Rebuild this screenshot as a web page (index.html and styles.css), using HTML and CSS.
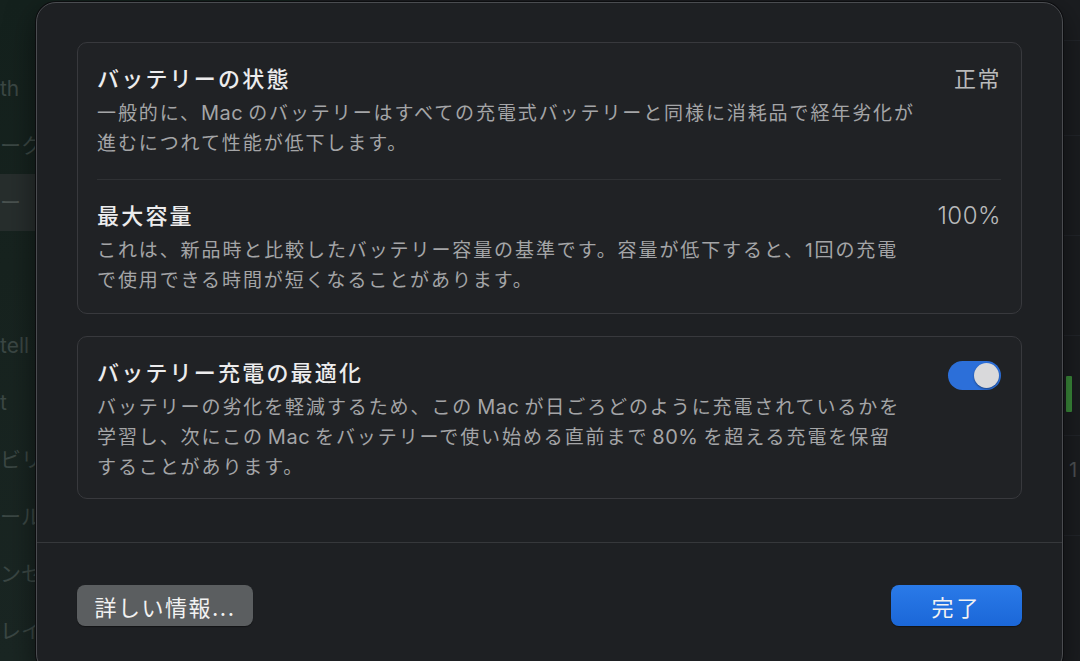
FILE: index.html
```html
<!DOCTYPE html>
<html lang="ja">
<head>
<meta charset="utf-8">
<title>バッテリーの状態</title>
<link rel="stylesheet" href="styles.css">
</head>
<body>
<div class="window">
  <nav class="sidebar">
    <div class="side-item">th</div>
    <div class="side-item">ーク</div>
    <div class="side-item selected">ー</div>
    <div class="side-item gap">tell</div>
    <div class="side-item">t</div>
    <div class="side-item">ビリ</div>
    <div class="side-item">ール</div>
    <div class="side-item">ンセ</div>
    <div class="side-item">レイ</div>
  </nav>
  <main class="main">
    <div class="main-row"></div>
    <div class="main-row"></div>
    <div class="main-row"></div>
    <div class="main-row"><span class="level"></span></div>
    <div class="main-row"><span class="num">1</span></div>
    <div class="main-row"></div>
  </main>
</div>

<div class="dialog">
  <div class="dialog-body">
    <section class="group">
      <div class="row">
        <div class="row-text">
          <div class="row-title">バッテリーの状態</div>
          <div class="row-desc">一般的に、<span class="latin-word after-punct">Mac</span>のバッテリーはすべての充電式バッテリーと同様に消耗品で経年劣化が<br>進むにつれて性能が低下します。</div>
        </div>
        <div class="row-value">正常</div>
      </div>
      <div class="separator"></div>
      <div class="row row-last">
        <div class="row-text">
          <div class="row-title">最大容量</div>
          <div class="row-desc">これは、新品時と比較したバッテリー容量の基準です。容量が低下すると、1回の充電<br>で使用できる時間が短くなることがあります。</div>
        </div>
        <div class="row-value latin">100%</div>
      </div>
    </section>

    <section class="group">
      <div class="row row-single">
        <div class="row-text">
          <div class="row-title">バッテリー充電の最適化</div>
          <div class="row-desc">バッテリーの劣化を軽減するため、この<span class="latin-word">Mac</span>が日ごろどのように充電されているかを<br>学習し、次にこの<span class="latin-word">Mac</span>をバッテリーで使い始める直前まで<span class="latin-word">80%</span>を超える充電を保留<br>することがあります。</div>
        </div>
        <div class="toggle"><span class="knob"></span></div>
      </div>
    </section>
  </div>

  <footer class="dialog-footer">
    <button class="btn btn-secondary">詳しい情報...</button>
    <button class="btn btn-primary">完了</button>
  </footer>
</div>
</body>
</html>
```

FILE: styles.css
```css
* { box-sizing: border-box; }

html, body {
  margin: 0;
  padding: 0;
  width: 1080px;
  height: 661px;
  overflow: hidden;
  background: #1b1d20;
  font-family: "Inter", "Noto Sans CJK JP", sans-serif;
}

.window {
  display: flex;
  width: 1080px;
  height: 661px;
}

.sidebar {
  width: 300px;
  flex: none;
  display: flex;
  flex-direction: column;
  padding-top: 60px;
  background: linear-gradient(180deg, #14211d 0%, #17231f 40%, #1a2623 100%);
}

.side-item {
  height: 57px;
  line-height: 57px;
  font-size: 21px;
  color: #3b4744;
  white-space: nowrap;
}

.side-item.selected {
  background: #272e2d;
  color: #4a5250;
}

.side-item.gap {
  margin-top: 86px;
}

.main {
  flex: 1;
  display: flex;
  flex-direction: column;
  background: #1b1d20;
  padding-top: 40px;
}

.main-row {
  height: 100px;
  border-top: 1px solid #22252a;
  padding-left: 766px;
}

.main-row:first-child {
  height: 95px;
}

.level {
  display: block;
  width: 6px;
  height: 36px;
  margin-top: 40px;
  background: #3a8a3a;
  border-radius: 1px;
}

.num {
  display: block;
  margin-top: 22px;
  margin-left: 3px;
  font-size: 20px;
  color: #4d5154;
}

.dialog {
  position: absolute;
  left: 36px;
  top: 2px;
  width: 1027px;
  height: 672px;
  background: #1e2023;
  border: 1px solid #4a4c50;
  border-radius: 20px;
  box-shadow: 0 0 0 1px #0c0d0f, 0 10px 30px rgba(0,0,0,0.5);
  display: flex;
  flex-direction: column;
}

.dialog-body {
  padding: 39px 40px 0 40px;
  display: flex;
  flex-direction: column;
  gap: 22px;
}

.group {
  background: #202225;
  border: 1px solid #38393d;
  border-radius: 10px;
  display: flex;
  flex-direction: column;
}

.row {
  display: flex;
  justify-content: space-between;
  align-items: flex-start;
  padding: 21px 20px 20px 19px;
}

.row-last {
  padding-bottom: 17px;
}

.row-single {
  padding-bottom: 15px;
}

.row-text {
  display: flex;
  flex-direction: column;
  gap: 5px;
}

.row-title {
  font-size: 22px;
  line-height: 30px;
  font-weight: 500;
  letter-spacing: 2.2px;
  color: #ececed;
}

.row-desc {
  font-size: 19px;
  line-height: 30px;
  letter-spacing: 1.9px;
  color: #a4a5a7;
  white-space: nowrap;
}

.latin-word {
  font-size: 20px;
  line-height: 1;
  letter-spacing: 0.5px;
  margin: 0 5px 0 4px;
}

.latin-word.after-punct {
  margin-left: 0;
}

.row-value {
  font-size: 22px;
  line-height: 30px;
  letter-spacing: 1.5px;
  color: #b9babb;
}

.row-value.latin {
  letter-spacing: 0.5px;
  font-size: 24px;
  font-weight: 300;
}

.separator {
  height: 1px;
  margin: 0 20px 0 19px;
  background: #2f3134;
}

.toggle {
  width: 53px;
  height: 29px;
  margin-top: 3px;
  border-radius: 15px;
  background: #2c6fd9;
  display: flex;
  justify-content: flex-end;
  align-items: center;
  padding-right: 2px;
}

.knob {
  width: 25px;
  height: 25px;
  border-radius: 50%;
  background: #d9d9db;
  box-shadow: 0 1px 2px rgba(0,0,0,0.4);
}

.dialog-footer {
  margin-top: 43px;
  border-top: 1px solid #36383b;
  display: flex;
  justify-content: space-between;
  align-items: center;
  padding: 42px 40px 0 40px;
}

.btn {
  height: 41px;
  border: none;
  border-radius: 8px;
  font-family: "Inter", "Noto Sans CJK JP", sans-serif;
  font-size: 22px;
  letter-spacing: 1.5px;
  color: #f2f2f2;
  padding: 0;
}

.btn-secondary {
  width: 176px;
  background: #5b5e60;
  box-shadow: 0 1px 1px rgba(0,0,0,0.4);
}

.btn-primary {
  width: 131px;
  letter-spacing: 3px;
  background: linear-gradient(180deg, #2a7ae8 0%, #1b67d8 100%);
  box-shadow: 0 1px 1px rgba(0,0,0,0.4);
}
```
